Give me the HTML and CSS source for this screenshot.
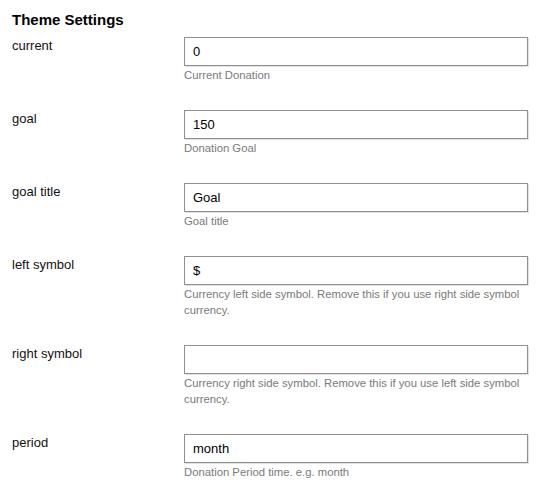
FILE: index.html
```
<!DOCTYPE html>
<html lang="en">
<head>
  <meta charset="UTF-8" />
  <meta name="viewport" content="width=device-width, initial-scale=1" />
  <title>Theme Settings</title>
  <link rel="stylesheet" href="styles.css">
</head>
<body>

<h2>Theme Settings</h2>
<form id="themeSettings" class="settings">
  <div class="row">
    <label for="current">current</label>
    <div class="field">
      <input type="text" id="current" value="0" />
      <p class="hint">Current Donation</p>
    </div>
  </div>

  <div class="row">
    <label for="goal">goal</label>
    <div class="field">
      <input type="text" id="goal" value="150" />
      <p class="hint">Donation Goal</p>
    </div>
  </div>

  <div class="row">
    <label for="goalTitle">goal title</label>
    <div class="field">
      <input type="text" id="goalTitle" value="Goal" />
      <p class="hint">Goal title</p>
    </div>
  </div>

  <div class="row">
    <label for="leftSymbol">left symbol</label>
    <div class="field">
      <input type="text" id="leftSymbol" value="$" />
      <p class="hint">Currency left side symbol. Remove this if you use right side symbol currency.</p>
    </div>
  </div>

  <div class="row">
    <label for="rightSymbol">right symbol</label>
    <div class="field">
      <input type="text" id="rightSymbol" value="" />
      <p class="hint">Currency right side symbol. Remove this if you use left side symbol currency.</p>
    </div>
  </div>

  <div class="row">
    <label for="period">period</label>
    <div class="field">
      <input type="text" id="period" value="month" />
      <p class="hint">Donation Period time. e.g. month</p>
    </div>
  </div>
</form>

</body>
</html>
```

FILE: styles.css
```
body { margin: 0; padding: 11px 12px; font-family: "Liberation Sans", Arial, Helvetica, sans-serif; background: #fff; color: #111; }
h2 { margin: 0 0 8px; font-size: 15px; line-height: 18px; font-weight: bold; color: #000; }
.settings { display: flex; flex-direction: column; gap: 27px; }
.row { display: grid; grid-template-columns: 172px 344px; align-items: start; }
.row label { font-size: 13px; line-height: 16px; padding-top: 1px; color: #111; }
.field input { display: block; box-sizing: border-box; width: 344px; height: 29px; margin: 0; padding: 0 8px; font-family: inherit; font-size: 13px; color: #000; border: 1px solid #8f8f8f; border-radius: 0; box-shadow: 1px 1px 0 #e2e2e2; outline: none; }
.hint { margin: 1px 0 0; font-size: 11.3px; line-height: 16px; color: #7a7a7a; }
```
